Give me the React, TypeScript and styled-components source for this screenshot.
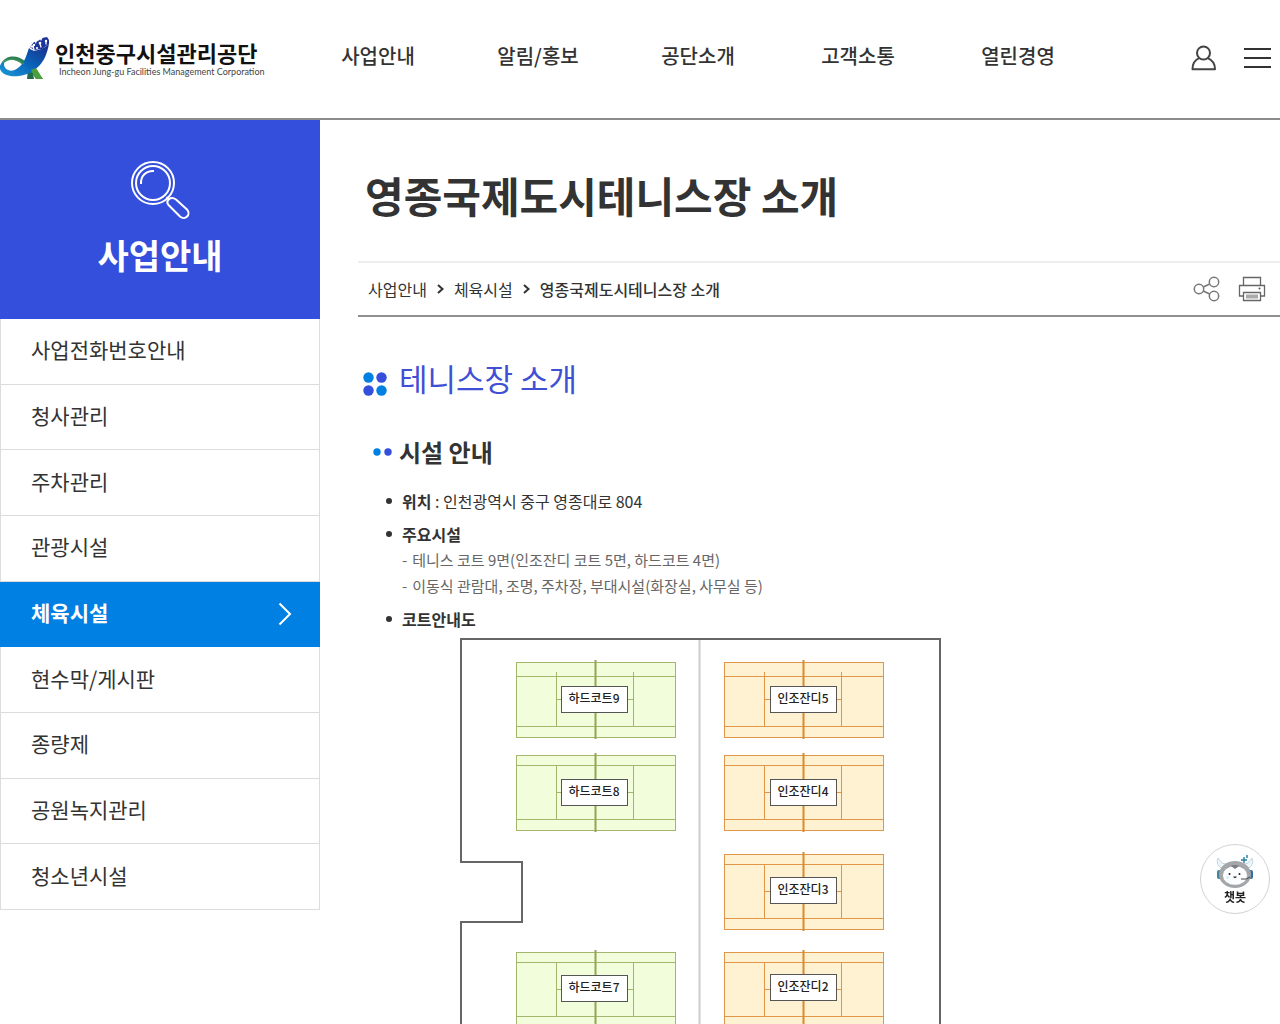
import React from "react";
import styled, { createGlobalStyle } from "styled-components";

const GlobalStyle = createGlobalStyle`
  *, *::before, *::after { box-sizing: border-box; }
  body {
    margin: 0;
    background: #fff;
    color: #333;
    font-family: "Noto Sans CJK KR", "Noto Sans", sans-serif;
    font-size: 16px;
    line-height: 24px;
  }
  h1, h2, h3, p, ul, ol { margin: 0; padding: 0; }
  ul, ol { list-style: none; }
  a { color: inherit; text-decoration: none; }
  button { padding: 0; border: 0; background: none; color: inherit; font: inherit; cursor: pointer; }
  svg { display: block; }
`;

const Header = styled.header`
  display: flex;
  align-items: center;
  height: 120px;
  padding-right: 8px;
  border-bottom: 2px solid #8c8c8c;
`;

const Logo = styled.a`
  display: flex;
  align-items: center;
  gap: 4px;
  flex: 0 0 298px;
  padding-bottom: 2px;
`;

const LogoText = styled.span`
  display: flex;
  flex-direction: column;
  color: #111;
  white-space: nowrap;
`;

const LogoName = styled.strong`
  font-size: 22px;
  font-weight: 700;
  line-height: 28px;
`;

const LogoSub = styled.span`
  padding-left: 4px;
  color: #444;
  font-family: Lato, "Liberation Sans", sans-serif;
  font-size: 9px;
  line-height: 12px;
`;

const MainNav = styled.nav`
  flex: 0 1 800px;
`;

const MainNavList = styled.ul`
  display: grid;
  grid-template-columns: repeat(5, 1fr);
`;

const MainNavItem = styled.li`
  text-align: center;
  font-size: 20px;
  font-weight: 500;
  line-height: 32px;
  padding-bottom: 6px;
`;

const HeaderTools = styled.div`
  display: flex;
  align-items: center;
  gap: 27px;
  margin-left: auto;
  padding-bottom: 2px;
`;

const Body = styled.div`
  display: flex;
  align-items: flex-start;
  gap: 38px;
`;

const Sidebar = styled.aside`
  flex: 0 0 320px;
`;

const SideTitle = styled.div`
  display: flex;
  flex-direction: column;
  align-items: center;
  height: 199px;
  padding-top: 40px;
  gap: 11px;
  background: #344fdb;
  color: #fff;
`;

const SideHeading = styled.h2`
  font-size: 34px;
  font-weight: 700;
  line-height: 48px;
`;

const SideList = styled.ul`
  display: flex;
  flex-direction: column;
  height: 591px;
`;

const SideItem = styled.li`
  flex: 1;
  display: flex;
`;

const SideLink = styled.a<{ $active?: boolean }>`
  flex: 1;
  display: flex;
  align-items: center;
  justify-content: space-between;
  padding: 0 27px 4px 30px;
  border: 1px solid ${(p) => (p.$active ? "#0080e3" : "#dcdcdc")};
  border-top-width: 0;
  background: ${(p) => (p.$active ? "#0080e3" : "#fff")};
  color: ${(p) => (p.$active ? "#fff" : "#333")};
  font-size: 21px;
  font-weight: ${(p) => (p.$active ? 700 : 400)};
  line-height: 32px;
  svg { margin-top: 4px; }
`;

const Main = styled.main`
  flex: 1;
  min-width: 0;
`;

const PageTitle = styled.h1`
  padding: 43px 0 34px 7px;
  font-size: 42px;
  font-weight: 700;
  line-height: 64px;
`;

const PathBar = styled.div`
  display: flex;
  align-items: center;
  justify-content: space-between;
  height: 56px;
  padding: 0 14px 0 10px;
  border-top: 2px solid #eee;
  border-bottom: 2px solid #909090;
`;

const Crumbs = styled.ol`
  display: flex;
  align-items: center;
  gap: 9px;
  font-size: 16px;
`;

const Crumb = styled.li<{ $current?: boolean }>`
  display: flex;
  align-items: center;
  gap: 9px;
  font-weight: ${(p) => (p.$current ? 500 : 400)};
`;

const PageTools = styled.div`
  display: flex;
  align-items: center;
  gap: 17px;
`;

const Content = styled.div`
  padding: 37px 0 0 5px;
`;

const SectionTitle = styled.h2`
  display: flex;
  align-items: center;
  gap: 12px;
  color: #3f50d5;
  font-size: 31px;
  font-weight: 400;
  line-height: 48px;
  svg { margin-top: 12px; }
`;

const SubTitle = styled.h3`
  display: flex;
  align-items: center;
  gap: 7px;
  padding: 30px 0 0 10px;
  font-size: 24px;
  font-weight: 700;
  line-height: 40px;
`;

const FactList = styled.ul`
  display: flex;
  flex-direction: column;
  gap: 7px;
  padding: 16px 0 0 23px;
`;

const Fact = styled.li`
  display: grid;
  grid-template-columns: 16px 1fr;
  line-height: 26px;
  &::before {
    content: "";
    width: 6px;
    height: 6px;
    margin-top: 10px;
    border-radius: 50%;
    background: #333;
  }
`;

const Label = styled.strong`
  font-weight: 700;
`;

const SubFact = styled.li`
  display: flex;
  gap: 5px;
  color: #666;
  font-size: 15px;
  line-height: 26px;
  &::before { content: "-"; }
`;

const MapFrame = styled.div`
  padding: 6px 0 0 97px;
`;

const MapText = styled.text`
  fill: #222;
  font-size: 12px;
  font-weight: 500;
  text-anchor: middle;
`;

const Chatbot = styled.button`
  position: fixed;
  right: 10px;
  bottom: 110px;
  display: flex;
  flex-direction: column;
  align-items: center;
  width: 70px;
  height: 70px;
  padding-top: 10px;
  border: 1px solid #d2d2d2;
  border-radius: 50%;
  background: #fff;
  color: #222;
  font-size: 12px;
  font-weight: 700;
  line-height: 16px;
`;

function LogoMark() {
  return (
    <svg width="51" height="44" viewBox="0 0 51 44" aria-hidden="true">
      <defs>
        <linearGradient id="wave" x1="0" y1="1" x2="1" y2="0">
          <stop offset="0" stopColor="#1a9ad8" />
          <stop offset="0.5" stopColor="#0a62b8" />
          <stop offset="1" stopColor="#1a2a8a" />
        </linearGradient>
      </defs>
      <path d="M28 34L32 32L34 43H27Z" fill="#1f6b4a" />
      <path d="M1 28C5 19 17 18 26 26C33 32 38 37 43 43H36C32 37 28 33 23 29C15 22 6 21 1 28Z" fill="#2a8050" />
      <path
        d="M29 12C34 17 42 14 49 8C47 18 44 25 39 30C33 36 27 39 19 40C10 41 2 39 0 33C-1 30 1 26 5 25C3 28 4 32 8 34C13 36 18 33 22 28C26 23 27 17 29 12Z"
        fill="url(#wave)"
      />
      <path d="M31 34L36 32L43 43H36Z" fill="#4c9f3c" />
      <path d="M4 26C10 21 18 23 24 28" fill="none" stroke="#3a8f5c" strokeWidth="1.500" />
      <path
        d="M30 11L34 6L38 5L42 2L47 1L49 4V8L42 13L34 14Z"
        fill="#1c349a"
      />
      <g fill="#fff">
        <path d="M33 3L36 8L37 4ZM39 1L41 5L43 1ZM29 9L32 12L34 10Z" />
        <circle cx="34" cy="9" r="1.200" />
        <circle cx="40" cy="7" r="1.300" />
        <circle cx="46" cy="5" r="1.200" />
        <circle cx="37" cy="12" r="1.100" />
      </g>
      <path d="M33 10L34 14M40 8L41 11M46 6L46 8" stroke="#fff" strokeWidth="1.300" strokeLinecap="round" />
    </svg>
  );
}

function UserIcon() {
  return (
    <svg width="26" height="26" viewBox="0 0 26 26" fill="none" stroke="#444" strokeWidth="2" aria-hidden="true">
      <circle cx="12.5" cy="8" r="6.5" />
      <path d="M8.2 13.2C4 15 1.5 19 1.5 24.2H24C24 19 21 15 16.8 13.2" strokeLinejoin="round" />
    </svg>
  );
}

function MenuIcon() {
  return (
    <svg width="28" height="22" viewBox="0 0 28 22" fill="#333" aria-hidden="true">
      <path d="M0 1H27V3H0ZM0 10H27V12H0ZM0 19H27V21H0Z" />
    </svg>
  );
}

function MagnifierIcon() {
  return (
    <svg width="60" height="60" viewBox="0 0 60 60" fill="none" stroke="#fff" aria-hidden="true">
      <circle cx="23" cy="23" r="21" strokeWidth="2" />
      <circle cx="23" cy="23" r="17" strokeWidth="2" />
      <path d="M11 24C10.500 16 16 10.500 24 11" strokeWidth="2" />
      <path
        d="M38.500 45L50 56.500C55 61 61.500 54.500 57 49.500L46 39.500C41 36 35 40 38.500 45ZM36.500 37L39.500 40"
        strokeWidth="2"
      />
    </svg>
  );
}

function Chevron() {
  return (
    <svg width="14" height="24" viewBox="0 0 14 24" fill="none" stroke="#fff" strokeWidth="2" aria-hidden="true">
      <path d="M1.500 1.500L12 12L1.500 22.500" />
    </svg>
  );
}

function CrumbArrow() {
  return (
    <svg width="9" height="12" viewBox="0 0 9 12" fill="none" stroke="#333" strokeWidth="2" aria-hidden="true">
      <path d="M2 2L6.500 6L2 10" />
    </svg>
  );
}

function ShareIcon() {
  return (
    <svg width="28" height="26" viewBox="0 0 28 26" fill="none" stroke="#777" strokeWidth="1.5" aria-hidden="true">
      <circle cx="6" cy="13" r="4.700" />
      <circle cx="21" cy="6" r="4.700" />
      <circle cx="21" cy="20" r="4.700" />
      <path d="M10.300 11L16.700 8M10.300 15L16.700 18" />
    </svg>
  );
}

function PrintIcon() {
  return (
    <svg width="28" height="26" viewBox="0 0 28 26" fill="none" stroke="#666" aria-hidden="true">
      <path d="M5.500 9V1.500H22.500V9M5.500 20H1.500V9.500H26.500V20H22.500" strokeWidth="1.300" />
      <path d="M5.500 16.500H22.500V24.500H5.500Z" strokeWidth="1.300" />
      <path d="M8 18.500H20V22.500H8Z" fill="#aaa" stroke="none" />
      <circle cx="21.500" cy="12.500" r="1" fill="#555" stroke="none" />
    </svg>
  );
}

function FourDots() {
  return (
    <svg width="24" height="24" viewBox="0 0 24 24" aria-hidden="true">
      <circle cx="5.500" cy="5.500" r="5.200" fill="#0080e3" />
      <circle cx="18.500" cy="5.500" r="5.200" fill="#344fdb" />
      <circle cx="5.500" cy="18.500" r="5.200" fill="#344fdb" />
      <circle cx="18.500" cy="18.500" r="5.200" fill="#0080e3" />
    </svg>
  );
}

function TwoDots() {
  return (
    <svg width="19" height="8" viewBox="0 0 19 8" aria-hidden="true">
      <circle cx="4" cy="4" r="3.700" fill="#0080e3" />
      <circle cx="15" cy="4" r="3.700" fill="#344fdb" />
    </svg>
  );
}

function RobotIcon() {
  return (
    <svg width="38" height="34" viewBox="0 0 38 34" aria-hidden="true">
      <path
        d="M12 10L6 8L2 3C0 7 2 12 7 14ZM26 10L32 8L36 3C38 7 36 12 31 14Z"
        fill="#eef6fa"
        stroke="#b4cad5"
        strokeWidth="0.800"
      />
      <rect x="1" y="15" width="5" height="9" rx="2" fill="#3f8796" />
      <rect x="32" y="15" width="5" height="9" rx="2" fill="#2f6fa0" />
      <ellipse cx="19" cy="19.500" rx="16" ry="13.500" fill="#a4a6a9" />
      <ellipse cx="19" cy="20.500" rx="12.500" ry="9.800" fill="#fbfdff" stroke="#888d91" strokeWidth="0.600" />
      <path d="M15 11L19 14L23 11Q19 9 15 11Z" fill="#777d83" />
      <circle cx="13.500" cy="19" r="1" fill="#222" />
      <circle cx="23.500" cy="19" r="1" fill="#222" />
      <path d="M17 21.500Q19 25 21 21.500Z" fill="#333" />
      <circle cx="11.500" cy="22.500" r="1.500" fill="#d4eef3" />
      <path d="M34 22Q31 25 25 24" fill="none" stroke="#444" />
      <path d="M28 2V8M25 5H31M31 0V3" stroke="#237ba8" strokeWidth="1.400" />
    </svg>
  );
}

type CourtProps = {
  x: number;
  y: number;
  name: string;
  kind: "hard" | "turf";
  wideTop?: boolean;
  boxTop: number;
};

const courtColors = {
  hard: { line: "#a5b56c", net: "#93a552", fill: "#f2fddc" },
  turf: { line: "#e2964a", net: "#d98a2c", fill: "#fff2d2" },
};

function Court({ x, y, name, kind, wideTop, boxTop }: CourtProps) {
  const { line, net, fill } = courtColors[kind];
  const boxX = kind === "hard" ? 45 : 46;
  return (
    <g transform={`translate(${x} ${y})`}>
      <rect x="0.5" y="0.5" width="159" height="75" fill={fill} stroke={line} />
      <path
        d={`M0 ${wideTop ? 14.5 : 10.5}H160M0 64.500H160M40.500 10V64M117.500 10V64M40 37.500H118`}
        stroke={line}
        fill="none"
      />
      <path d="M79.500 -2V77" stroke={net} strokeWidth="2" />
      <rect x={boxX + 0.5} y={boxTop + 0.5} width="66" height="26" fill="#fff" stroke="#555" />
      <MapText x={boxX + 33} y={boxTop + 17}>{name}</MapText>
    </g>
  );
}

const courts: CourtProps[] = [
  { x: 56, y: 24, name: "하드코트9", kind: "hard", wideTop: true, boxTop: 24 },
  { x: 56, y: 117, name: "하드코트8", kind: "hard", boxTop: 24 },
  { x: 56, y: 314, name: "하드코트7", kind: "hard", boxTop: 23 },
  { x: 264, y: 24, name: "인조잔디5", kind: "turf", wideTop: true, boxTop: 24 },
  { x: 264, y: 117, name: "인조잔디4", kind: "turf", boxTop: 24 },
  { x: 264, y: 216, name: "인조잔디3", kind: "turf", boxTop: 23 },
  { x: 264, y: 314, name: "인조잔디2", kind: "turf", boxTop: 22 },
];

function CourtMap() {
  return (
    <svg width="482" height="386" viewBox="0 0 482 386" role="img" aria-label="코트안내도">
      <path d="M239.500 2V386" stroke="#ccc" strokeWidth="2" />
      <path d="M1 386V284H62V224H1V1H480V386" fill="none" stroke="#666" strokeWidth="2" />
      {courts.map((court) => (
        <Court key={court.name} {...court} />
      ))}
    </svg>
  );
}

const mainMenu = ["사업안내", "알림/홍보", "공단소개", "고객소통", "열린경영"];

const sideMenu = [
  "사업전화번호안내",
  "청사관리",
  "주차관리",
  "관광시설",
  "체육시설",
  "현수막/게시판",
  "종량제",
  "공원녹지관리",
  "청소년시설",
];

export default function App() {
  return (
    <>
      <GlobalStyle />
      <Header>
        <Logo href="#">
          <LogoMark />
          <LogoText>
            <LogoName>인천중구시설관리공단</LogoName>
            <LogoSub>Incheon Jung-gu Facilities Management Corporation</LogoSub>
          </LogoText>
        </Logo>
        <MainNav>
          <MainNavList>
            {mainMenu.map((item) => (
              <MainNavItem key={item}>
                <a href="#">{item}</a>
              </MainNavItem>
            ))}
          </MainNavList>
        </MainNav>
        <HeaderTools>
          <button type="button" aria-label="로그인"><UserIcon /></button>
          <button type="button" aria-label="전체메뉴"><MenuIcon /></button>
        </HeaderTools>
      </Header>

      <Body>
        <Sidebar>
          <SideTitle>
            <MagnifierIcon />
            <SideHeading>사업안내</SideHeading>
          </SideTitle>
          <SideList>
            {sideMenu.map((item) => (
              <SideItem key={item}>
                <SideLink href="#" $active={item === "체육시설"}>
                  {item}
                  {item === "체육시설" && <Chevron />}
                </SideLink>
              </SideItem>
            ))}
          </SideList>
        </Sidebar>

        <Main>
          <PageTitle>영종국제도시테니스장 소개</PageTitle>
          <PathBar>
            <Crumbs>
              <Crumb><a href="#">사업안내</a><CrumbArrow /></Crumb>
              <Crumb><a href="#">체육시설</a><CrumbArrow /></Crumb>
              <Crumb $current>영종국제도시테니스장 소개</Crumb>
            </Crumbs>
            <PageTools>
              <button type="button" aria-label="공유"><ShareIcon /></button>
              <button type="button" aria-label="인쇄"><PrintIcon /></button>
            </PageTools>
          </PathBar>

          <Content>
            <SectionTitle><FourDots />테니스장 소개</SectionTitle>
            <SubTitle><TwoDots />시설 안내</SubTitle>
            <FactList>
              <Fact><p><Label>위치</Label> : 인천광역시 중구 영종대로 804</p></Fact>
              <Fact>
                <div>
                  <Label>주요시설</Label>
                  <ul>
                    <SubFact>테니스 코트 9면(인조잔디 코트 5면, 하드코트 4면)</SubFact>
                    <SubFact>이동식 관람대, 조명, 주차장, 부대시설(화장실, 사무실 등)</SubFact>
                  </ul>
                </div>
              </Fact>
              <Fact><Label>코트안내도</Label></Fact>
            </FactList>
            <MapFrame><CourtMap /></MapFrame>
          </Content>
        </Main>
      </Body>

      <Chatbot type="button">
        <RobotIcon />
        챗봇
      </Chatbot>
    </>
  );
}
